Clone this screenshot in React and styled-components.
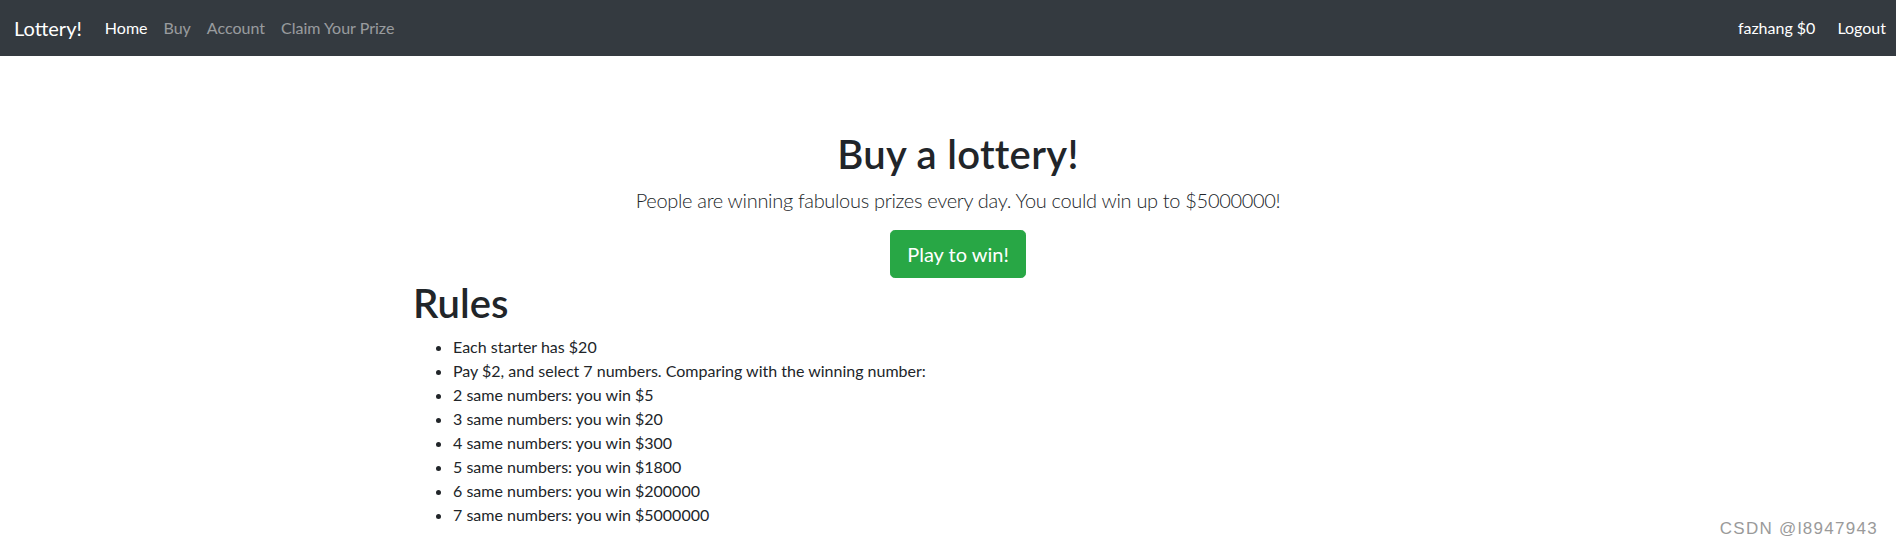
import React from "react";
import styled, { createGlobalStyle } from "styled-components";

const rules = [
  "Each starter has $20",
  "Pay $2, and select 7 numbers. Comparing with the winning number:",
  "2 same numbers: you win $5",
  "3 same numbers: you win $20",
  "4 same numbers: you win $300",
  "5 same numbers: you win $1800",
  "6 same numbers: you win $200000",
  "7 same numbers: you win $5000000",
];

const App = () => {
  return (
    <>
      <GlobalStyle />
      <Navbar>
        <Brand>Lottery!</Brand>
        <NavList>
          <NavLink active>Home</NavLink>
          <NavLink>Buy</NavLink>
          <NavLink>Account</NavLink>
          <NavLink>Claim Your Prize</NavLink>
        </NavList>
        <NavRight>
          <NavUser>fazhang $0</NavUser>
          <NavLink active>Logout</NavLink>
        </NavRight>
      </Navbar>
      <Main>
        <Container>
          <Hero>
            <Title>Buy a lottery!</Title>
            <Lead>
              People are winning fabulous prizes every day. You could win up
              to $5000000!
            </Lead>
            <PlayButton>Play to win!</PlayButton>
          </Hero>
          <Heading>Rules</Heading>
          <RuleList>
            {rules.map((r) => (
              <li key={r}>{r}</li>
            ))}
          </RuleList>
        </Container>
      </Main>
      <Watermark>CSDN @l8947943</Watermark>
    </>
  );
};

export default App;

const GlobalStyle = createGlobalStyle`
  body {
    margin: 0;
    background: #fff;
    color: #212529;
    font-family: "Segoe UI", Lato, "Liberation Sans", sans-serif;
    font-size: 16px;
    line-height: 1.5;
  }
  * {
    box-sizing: border-box;
  }
`;

const Navbar = styled.nav`
  height: 56px;
  background: #343a40;
  display: flex;
  align-items: center;
  padding: 0 2px 0 14px;
`;

const Brand = styled.a`
  font-size: 20px;
  line-height: 30px;
  color: #fff;
  margin-right: 15px;
`;

const NavList = styled.div`
  display: flex;
  align-items: center;
`;

const NavLink = styled.a`
  padding: 8px;
  color: ${(p) => (p.active ? "#fff" : "rgba(255, 255, 255, 0.5)")};
  cursor: pointer;
`;

const NavRight = styled.div`
  margin-left: auto;
  display: flex;
  align-items: center;
  gap: 6px;
`;

const NavUser = styled.span`
  padding: 8px;
  color: #fff;
`;

const Main = styled.main`
  padding-left: 20px;
`;

const Container = styled.div`
  max-width: 1090px;
  margin: 0 auto;
`;

const Hero = styled.section`
  text-align: center;
  padding-top: 74px;
`;

const Title = styled.h1`
  margin: 0 0 7px;
  font-size: 40px;
  font-weight: 600;
  line-height: 1.2;
  letter-spacing: 0.3px;
`;

const Lead = styled.p`
  margin: 0 0 15px;
  font-size: 20px;
  font-weight: 300;
  letter-spacing: -0.32px;
`;

const PlayButton = styled.button`
  display: inline-block;
  font-family: inherit;
  font-size: 20px;
  line-height: 1.5;
  padding: 8px 16px;
  color: #fff;
  background: #28a745;
  border: 1px solid #28a745;
  border-radius: 4.8px;
  cursor: pointer;
`;

const Heading = styled.h1`
  margin: 1px 0 8px;
  font-size: 40px;
  font-weight: 600;
  line-height: 1.2;
`;

const RuleList = styled.ul`
  margin: 0;
  padding-left: 40px;
`;

const Watermark = styled.div`
  position: absolute;
  right: 18px;
  top: 516px;
  font-family: "Liberation Sans", Arial, sans-serif;
  font-size: 17px;
  letter-spacing: 1.3px;
  color: #9a9a9a;
`;
